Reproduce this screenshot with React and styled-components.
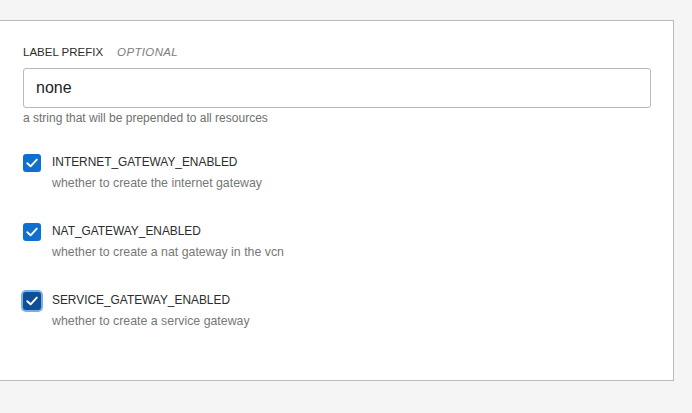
import React from "react";
import styled, { createGlobalStyle } from "styled-components";

const Global = createGlobalStyle`
  html, body { margin: 0; padding: 0; background: #f5f5f5; }
  body { font-family: "Liberation Sans", Arial, sans-serif; }
`;

const Page = styled.div`
  padding-top: 20px;
  min-height: 413px;
  box-sizing: border-box;
`;

const Panel = styled.section`
  width: 674px;
  box-sizing: border-box;
  background: #fff;
  border: 1px solid #b5bbc3;
  border-left: none;
  padding: 24px 22px 51px 23px;
  display: flex;
  flex-direction: column;
`;

const FieldLabel = styled.div`
  font-size: 11.5px;
  line-height: 14px;
  color: #2c2c2c;
  text-transform: uppercase;
  display: flex;
  gap: 14px;
  margin-bottom: 9px;
`;

const Optional = styled.span`
  font-style: italic;
  color: #7d7d7d;
  letter-spacing: 0.35px;
`;

const TextInput = styled.input`
  box-sizing: border-box;
  width: 628px;
  height: 40px;
  border: 1px solid #b5bbc3;
  border-radius: 3px;
  padding: 0 12px;
  font-family: "Liberation Sans", Arial, sans-serif;
  font-size: 16px;
  color: #222;
  outline: none;
`;

const Help = styled.div`
  font-size: 12px;
  line-height: 14px;
  color: #6f6f6f;
  margin-top: 3px;
`;

const List = styled.div`
  display: flex;
  flex-direction: column;
  gap: 32px;
  margin-top: 29px;
`;

const Row = styled.label`
  display: flex;
  align-items: flex-start;
  gap: 11px;
`;

const Box = styled.span`
  width: 18px;
  height: 18px;
  flex: none;
  border-radius: 3px;
  background: ${(p) => (p.$focused ? "#0e4f97" : "#0f6fcf")};
  box-shadow: ${(p) => (p.$focused ? "0 0 0 2px #7aaee6" : "none")};
  display: flex;
  align-items: center;
  justify-content: center;
`;

const Texts = styled.div`
  display: flex;
  flex-direction: column;
  gap: 5px;
`;

const Name = styled.span`
  font-size: 11.9px;
  line-height: 16px;
  color: #2c2c2c;
`;

const Desc = styled.span`
  font-size: 12.35px;
  line-height: 16px;
  color: #777;
`;

const Check = () => (
  <svg width="14" height="14" viewBox="0 0 14 14">
    <path d="M2.3 7.2 L5.6 10.3 L11.8 3.6" fill="none" stroke="#fff" strokeWidth="1.9" strokeLinecap="round" strokeLinejoin="round" />
  </svg>
);

const items = [
  { name: "INTERNET_GATEWAY_ENABLED", desc: "whether to create the internet gateway" },
  { name: "NAT_GATEWAY_ENABLED", desc: "whether to create a nat gateway in the vcn" },
  { name: "SERVICE_GATEWAY_ENABLED", desc: "whether to create a service gateway", focused: true },
];

export default function App() {
  return (
    <Page>
      <Global />
      <Panel>
        <FieldLabel>
          <span>Label Prefix</span>
          <Optional>Optional</Optional>
        </FieldLabel>
        <TextInput defaultValue="none" />
        <Help>a string that will be prepended to all resources</Help>
        <List>
          {items.map((it) => (
            <Row key={it.name}>
              <Box $focused={it.focused}>
                <Check />
              </Box>
              <Texts>
                <Name>{it.name}</Name>
                <Desc>{it.desc}</Desc>
              </Texts>
            </Row>
          ))}
        </List>
      </Panel>
    </Page>
  );
}
